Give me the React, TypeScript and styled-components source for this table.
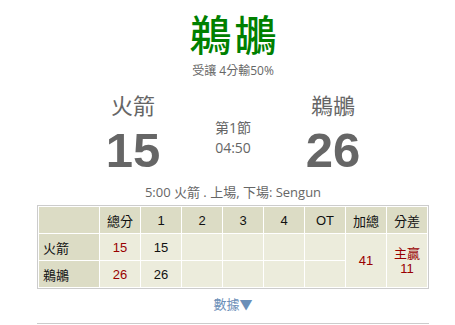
import React from "react";
import styled, {createGlobalStyle} from "styled-components";

const GRAY = "#666";
const RED = "#990000";
const HEAD_BG = "#dcdcc5";
const CELL_BG = "#ececdc";
const BORDER_COLOR = "#ccc";

const GlobalStyle = createGlobalStyle`
  html, body {
    margin: 0;
    padding: 0;
    background: #fff;
    overflow: hidden;
  }
  body {
    font-family: "Open Sans", "Noto Sans CJK TC", sans-serif;
  }
`;

const Page = styled.div({
  width: 450,
  marginLeft: 8,
  paddingTop: 9,
  display: "flex",
  flexDirection: "column",
  alignItems: "center",
});

const Title = styled.div({
  color: "#008000",
  fontSize: 42,
  lineHeight: "48px",
  fontWeight: 500,
  letterSpacing: 3,
  paddingLeft: 3,
  fontFamily: `"Noto Sans CJK TC", sans-serif`,
});

const Handicap = styled.div({
  color: GRAY,
  fontSize: 12,
  lineHeight: "16px",
  marginTop: 6,
});

const ScoreRow = styled.div({
  width: 300,
  display: "grid",
  gridTemplateColumns: "repeat(3, 1fr)",
  alignItems: "center",
  marginTop: 12,
  color: GRAY,
});

const TeamBox = styled.div({
  display: "flex",
  flexDirection: "column",
  alignItems: "center",
});

const TeamName = styled.div({
  fontSize: 22,
  lineHeight: "28px",
});

const Score = styled.div({
  fontFamily: `"Liberation Sans", Arial, sans-serif`,
  fontWeight: 700,
  fontSize: 49,
  lineHeight: "52px",
  marginTop: 5,
});

const Period = styled.div({
  display: "flex",
  flexDirection: "column",
  alignItems: "center",
  fontSize: 14,
  lineHeight: "20px",
  marginTop: 8,
});

const Status = styled.div({
  color: GRAY,
  fontSize: 13,
  lineHeight: "18px",
  marginTop: 7,
});

const Board = styled.table({
  marginTop: 4,
  width: 392,
  borderCollapse: "separate",
  borderSpacing: 1,
  border: `1px solid ${BORDER_COLOR}`,
  background: "#fff",
  fontFamily: `"Liberation Sans", "Noto Sans CJK TC", sans-serif`,
  fontSize: 13,
  color: "#111",
  tableLayout: "fixed",
});

const Head = styled.th<{ $first?: boolean }>(({ $first }) => ({
  background: HEAD_BG,
  height: 26,
  padding: 0,
  fontWeight: 400,
  textAlign: "center",
  width: $first ? 60 : 40,
}));

const Label = styled.td({
  background: HEAD_BG,
  height: 26,
  padding: "0 0 0 4px",
  textAlign: "left",
});

const Cell = styled.td<{ $red?: boolean }>(({ $red }) => ({
  background: CELL_BG,
  height: 26,
  padding: 0,
  textAlign: "center",
  color: $red ? RED : "#111",
}));

const Margin = styled.span({
  display: "block",
  lineHeight: "15px",
});

const MoreLink = styled.a({
  color: "#6b8fb8",
  fontSize: 13,
  lineHeight: "18px",
  marginTop: 6,
  textDecoration: "none",
  cursor: "pointer",
});

const Rule = styled.div({
  width: 392,
  height: 1,
  background: BORDER_COLOR,
  marginTop: 10,
});

const quarters = ["總分", "1", "2", "3", "4", "OT", "加總", "分差"];

const teams = [
  { name: "火箭", total: "15", q: ["15", "", "", "", ""] },
  { name: "鵜鶘", total: "26", q: ["26", "", "", "", ""] },
];

export default function App() {
  return (
    <>
      <GlobalStyle />
      <Page>
        <Title>鵜鶘</Title>
        <Handicap>受讓 4分輸50%</Handicap>

        <ScoreRow>
          <TeamBox>
            <TeamName>火箭</TeamName>
            <Score>15</Score>
          </TeamBox>
          <Period>
            <div>第1節</div>
            <div>04:50</div>
          </Period>
          <TeamBox>
            <TeamName>鵜鶘</TeamName>
            <Score>26</Score>
          </TeamBox>
        </ScoreRow>

        <Status>5:00 火箭 . 上場, 下場: Sengun</Status>

        <Board>
          <thead>
            <tr>
              <Head $first />
              {quarters.map((q) => (
                <Head key={q}>{q}</Head>
              ))}
            </tr>
          </thead>
          <tbody>
            {teams.map((t, i) => (
              <tr key={t.name}>
                <Label>{t.name}</Label>
                <Cell $red>{t.total}</Cell>
                {t.q.map((v, j) => (
                  <Cell key={j}>{v}</Cell>
                ))}
                {i === 0 && (
                  <>
                    <Cell $red rowSpan={2}>41</Cell>
                    <Cell $red rowSpan={2}>
                      <Margin>主贏</Margin>
                      <Margin>11</Margin>
                    </Cell>
                  </>
                )}
              </tr>
            ))}
          </tbody>
        </Board>

        <MoreLink>數據▼</MoreLink>
        <Rule />
      </Page>
    </>
  );
}
